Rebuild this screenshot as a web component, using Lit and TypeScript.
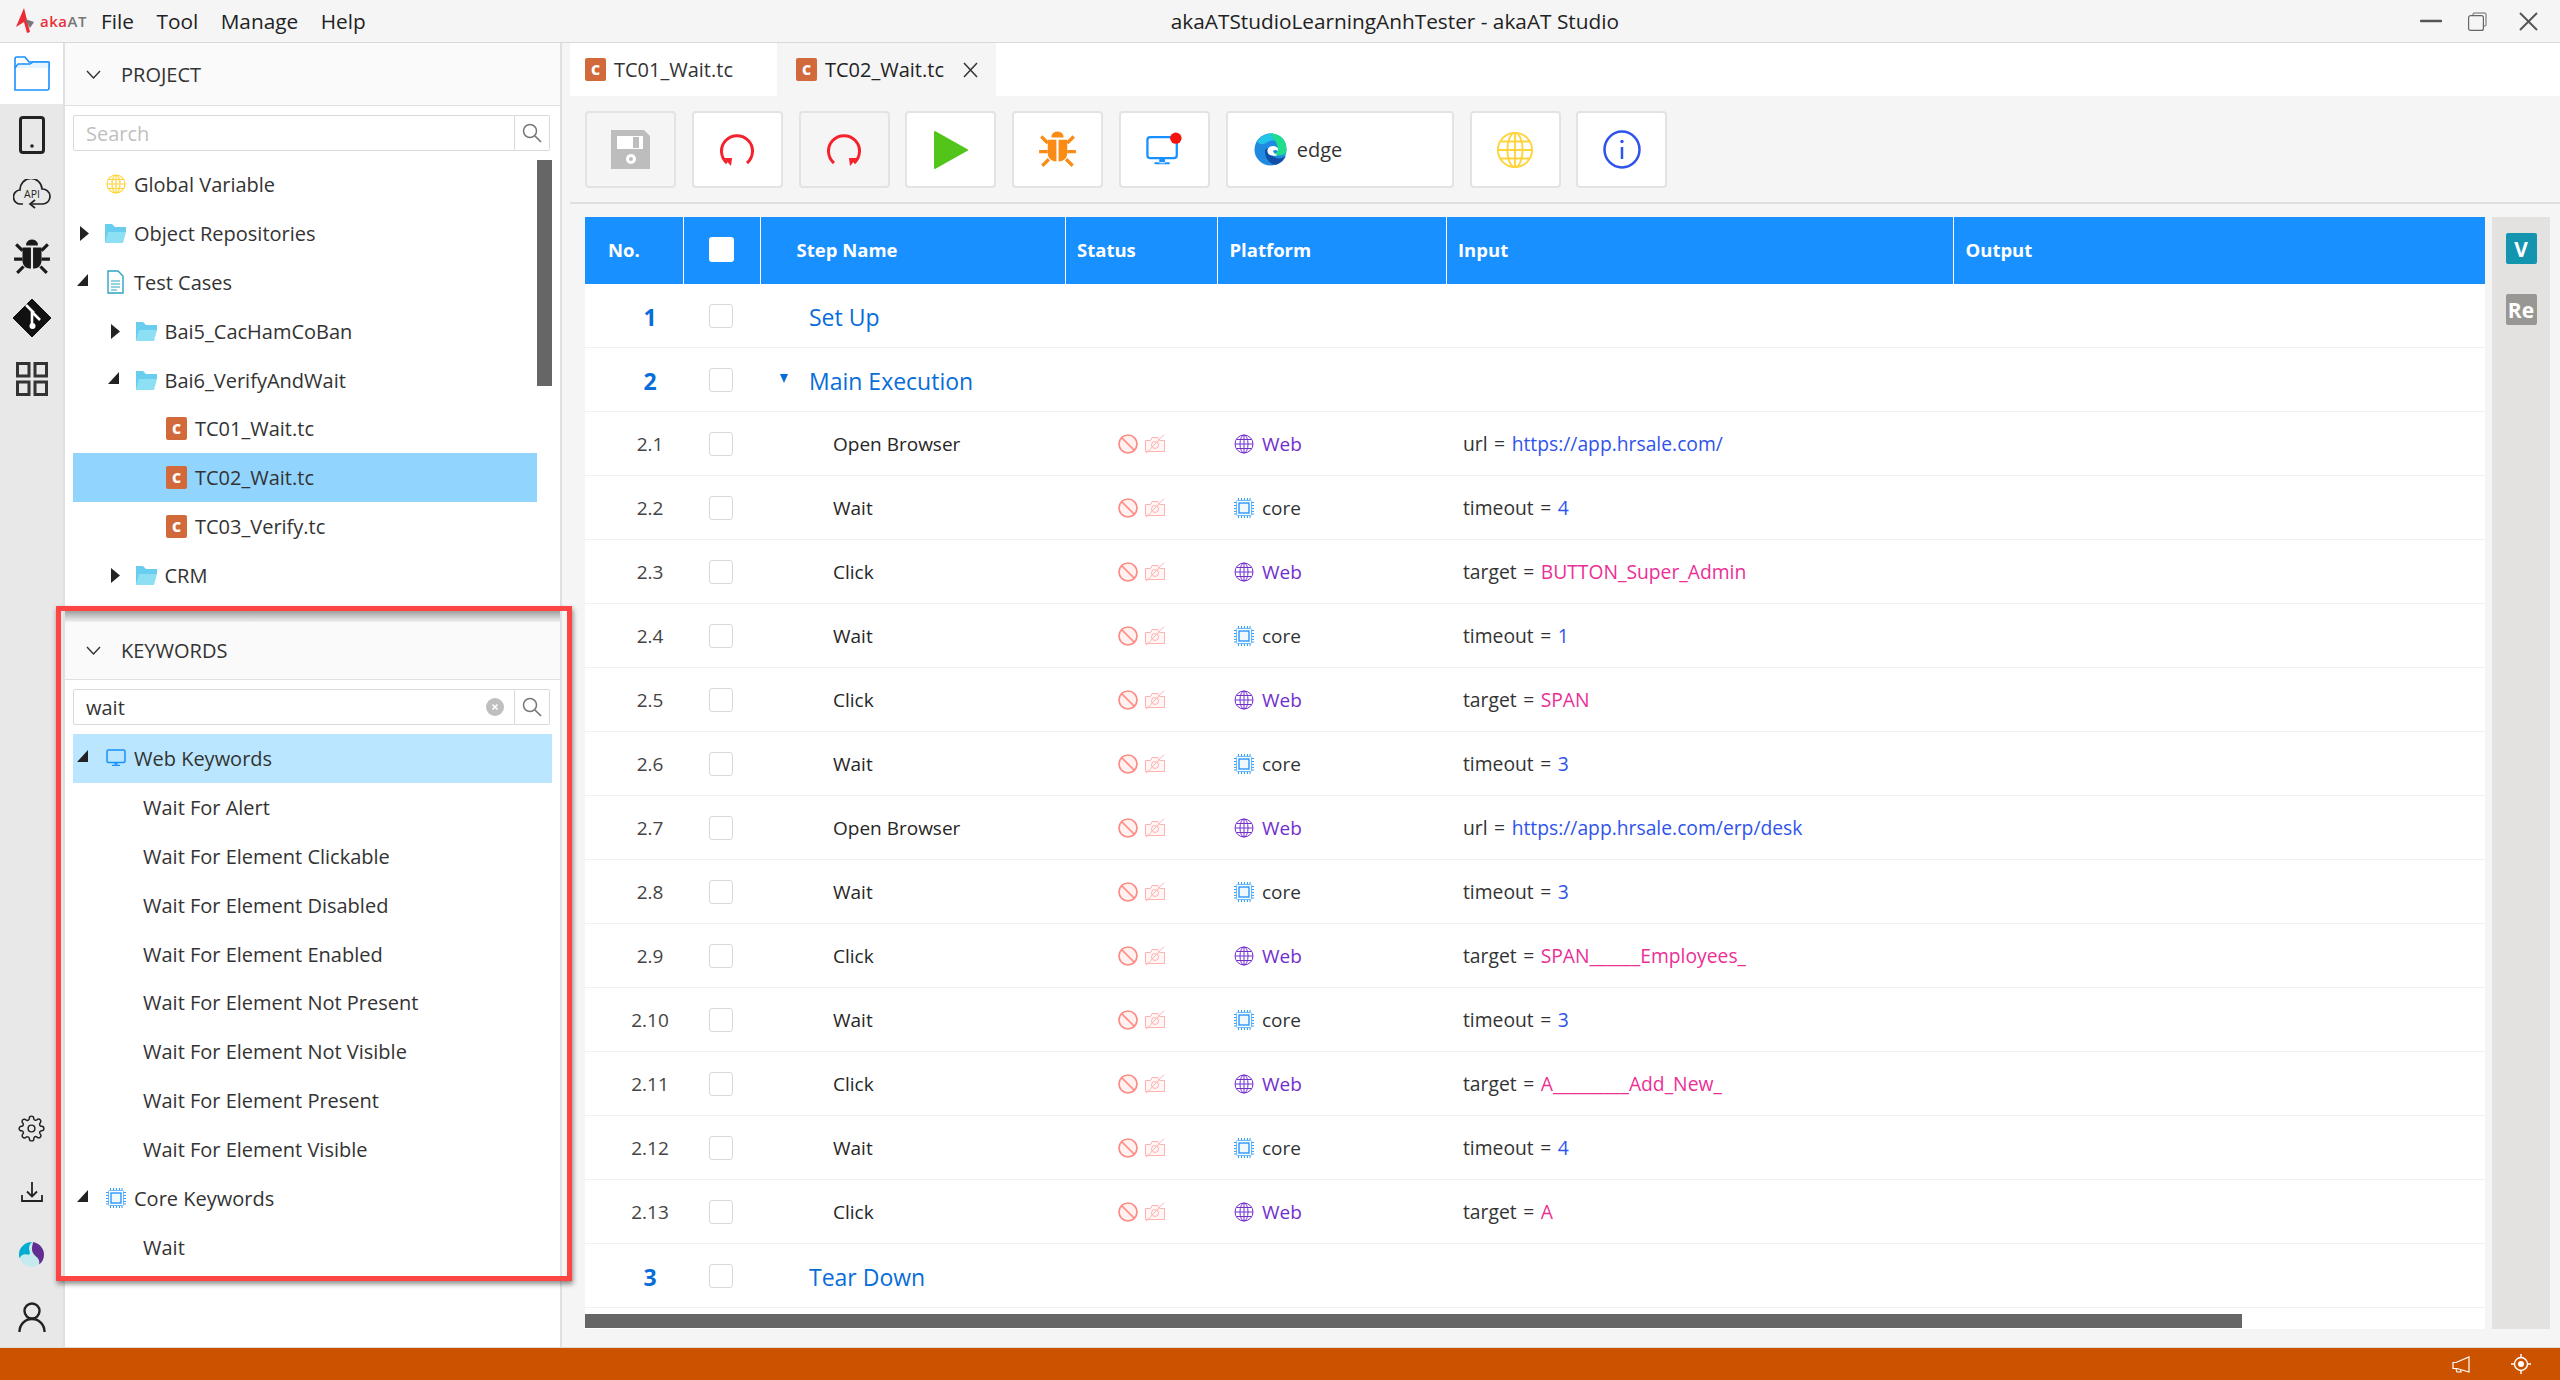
import { LitElement, html, css, svg } from "lit";
import { customElement } from "lit/decorators.js";

const icon = (w: number, h: number, box: string, body: unknown) => html`<svg
  width=${w}
  height=${h}
  viewBox=${box}
  fill="none"
  style="flex:none;display:block"
>
  ${body}
</svg>`;

const bugBody = (c: string) => svg`
  <path d="M12 5a6 6 0 0 1 11 0v2H12z" fill=${c} transform="translate(.5 -1)"/>
  <path d="M9 8h8v20c-5 0-8-3-8-8z" fill=${c}/>
  <path d="M19 8h8v12c0 5-3 8-8 8z" fill=${c}/>
  <path d="M9 11 3 5M27 11l6-6M9 19H1M27 19h8M10 26l-6 6M26 26l6 6" stroke=${c} stroke-width="3"/>`;

const icons = {
  logo: () =>
    icon(20, 26, "0 0 20 26", svg`
      <path d="M9 0 1 19l8-5 3 11 3-1L9 0z" fill="#ee2a33"/>
      <path d="M10 11l9 3-4 6z" fill="#777"/>`),
  folderLine: () =>
    icon(38, 36, "0 0 38 36", svg`
      <path d="M2 34V3q0-2 2-2h8l4 5h18q2 0 2 2v24q0 2-2 2z" stroke="#1890ff" stroke-width="1.6" fill="#fff"/>
      <path d="M2 12 5 8h12l3-2h16v6" stroke="#1890ff" stroke-width="1.4" fill="#e6f4ff"/>`),
  mobile: () =>
    icon(26, 38, "0 0 26 38", svg`
      <rect x="1.5" y="1.5" width="23" height="35" rx="2.5" stroke="#222" stroke-width="3"/>
      <circle cx="13" cy="30" r="1.8" fill="#222"/>`),
  api: () =>
    icon(38, 34, "0 0 38 34", svg`
      <path d="M10 25H8a7 7 0 0 1-1-14 11 11 0 0 1 22-1 7.5 7.5 0 0 1 1 15H18" stroke="#222" stroke-width="1.7"/>
      <path d="M22 21l-5 4 5 4" stroke="#222" stroke-width="1.7"/>
      <text x="19" y="19" font-size="10.5" text-anchor="middle" fill="#222" font-family="Open Sans">API</text>`),
  bugDark: () => icon(38, 38, "0 0 36 34", bugBody("#1a1a1a")),
  bugOrange: () => icon(39, 39, "0 0 36 34", bugBody("#fa8c16")),
  git: () =>
    icon(38, 38, "0 0 38 38", svg`
      <path d="M19 0 38 19 19 38 0 19z" fill="#111" stroke="#111" stroke-linejoin="round" stroke-width="1"/>
      <path d="M13 6l8 8M19 12v14M20 14l7 7" stroke="#fff" stroke-width="2.6"/>
      <circle cx="19.5" cy="27" r="3" fill="#fff"/>`),
  grid: () =>
    icon(32, 34, "0 0 32 34", svg`
      <g stroke="#333" stroke-width="3">
        <rect x="1.5" y="1.5" width="11.5" height="12.5"/>
        <rect x="19" y="1.5" width="11.5" height="12.5"/>
        <rect x="1.5" y="20" width="11.5" height="12.5"/>
        <rect x="19" y="20" width="11.5" height="12.5"/>
      </g>`),
  gear: () =>
    icon(27, 27, "0 0 24 24", svg`
      <g stroke="#222" stroke-width="1.3">
        <circle cx="12" cy="12" r="3"/>
        <path d="M19.4 15a1.65 1.65 0 0 0 .33 1.82l.06.06a2 2 0 0 1 0 2.83 2 2 0 0 1-2.83 0l-.06-.06a1.65 1.65 0 0 0-1.82-.33 1.65 1.65 0 0 0-1 1.51V21a2 2 0 0 1-2 2 2 2 0 0 1-2-2v-.09A1.65 1.65 0 0 0 9 19.4a1.65 1.65 0 0 0-1.82.33l-.06.06a2 2 0 0 1-2.83 0 2 2 0 0 1 0-2.83l.06-.06a1.65 1.65 0 0 0 .33-1.82 1.65 1.65 0 0 0-1.51-1H3a2 2 0 0 1-2-2 2 2 0 0 1 2-2h.09A1.65 1.65 0 0 0 4.6 9a1.65 1.65 0 0 0-.33-1.82l-.06-.06a2 2 0 0 1 0-2.83 2 2 0 0 1 2.83 0l.06.06a1.65 1.65 0 0 0 1.82.33H9a1.65 1.65 0 0 0 1-1.51V3a2 2 0 0 1 2-2 2 2 0 0 1 2 2v.09a1.65 1.65 0 0 0 1 1.51 1.65 1.65 0 0 0 1.82-.33l.06-.06a2 2 0 0 1 2.83 0 2 2 0 0 1 0 2.83l-.06.06a1.65 1.65 0 0 0-.33 1.82V9a1.65 1.65 0 0 0 1.51 1H21a2 2 0 0 1 2 2 2 2 0 0 1-2 2h-.09a1.65 1.65 0 0 0-1.51 1z"/>
      </g>`),
  download: () =>
    icon(22, 22, "0 0 22 22", svg`
      <path d="M11 1v14M6 10.500l5 5 5-5M1 14v6h20v-6" stroke="#222" stroke-width="1.8"/>`),
  swirl: () =>
    icon(25, 25, "0 0 25 25", svg`
      <circle cx="12.500" cy="12.500" r="12.500" fill="#c6ebee"/>
      <path d="M14 .1C21 1.500 25 7 25 12.500c0 4.500-2 8-5 10 1-3.500-.5-6-3-8s-4.500-5-4-8.500c.3-2.500 1-4.500 1-5.900z" fill="#642d91"/>
      <path d="M13 0C6 0 0 5.500 0 12.500c0 1.500.2 2.500.6 3.700C2 13 5 11.500 8 12.500c2.500.7 3.500-1 2.500-3.500S10 2.500 13 0z" fill="#00acd2"/>`),
  user: () =>
    icon(28, 31, "0 0 28 31", svg`
      <circle cx="14" cy="9" r="7.500" stroke="#222" stroke-width="2.4"/>
      <path d="M1.500 30c0-7 5-13 12.500-13s12.500 6 12.500 13" stroke="#222" stroke-width="2.4"/>`),
  chevron: () =>
    icon(15, 9, "0 0 15 9", svg`<path d="M1 1l6.500 7L14 1" stroke="#333" stroke-width="1.4"/>`),
  search: () =>
    icon(20, 20, "0 0 20 20", svg`
      <circle cx="8" cy="8" r="6.500" stroke="#777" stroke-width="1.5"/>
      <path d="M13 13l6 6" stroke="#777" stroke-width="1.7"/>`),
  clear: () =>
    icon(18, 18, "0 0 18 18", svg`
      <circle cx="9" cy="9" r="9" fill="#bfbfbf"/>
      <path d="M6.500 6.500l5 5M11.500 6.500l-5 5" stroke="#fff" stroke-width="1.5"/>`),
  triRight: () =>
    icon(9, 15, "0 0 9 15", svg`<path d="M0 0l9 7.500L0 15z" fill="#222"/>`),
  triOpen: () =>
    icon(11, 12, "0 0 11 12", svg`<path d="M11 0v12H0z" fill="#222"/>`),
  triDown: () =>
    icon(8, 9, "0 0 8 9", svg`<path d="M0 0h8L4 9z" fill="#096dd9"/>`),
  globe: (size: number, c: string, sw = 1.3) =>
    icon(size, size, "0 0 20 20", svg`
      <g stroke=${c} stroke-width=${sw}>
        <circle cx="10" cy="10" r="9"/>
        <ellipse cx="10" cy="10" rx="4" ry="9"/>
        <path d="M10 1v18M1 10h18M2.500 5.500h15M2.500 14.500h15"/>
      </g>`),
  folder: () =>
    icon(21, 19, "0 0 21 19", svg`
      <path d="M0 19V0h7l3 3h11v5H5z" fill="#69cdf0"/>
      <path d="M3 8h18l-3 11H0z" fill="#8de0f4"/>`),
  doc: () =>
    icon(17, 24, "0 0 17 24", svg`
      <path d="M1 1h10l5 5v17H1z" stroke="#2ea3c6" stroke-width="1.400" fill="#fff"/>
      <path d="M4 11h9M4 14h9M4 17h9M4 20h6" stroke="#2ea3c6" stroke-width="1.200"/>`),
  monitor: (w: number, h: number) =>
    icon(w, h, "0 0 20 18", svg`
      <rect x="1" y="1" width="18" height="12.500" rx="1.500" stroke="#1890ff" stroke-width="1.500"/>
      <path d="M6 17h8v-1.200H6zM8.500 14h3v2h-3z" fill="#1890ff"/>`),
  chip: () =>
    icon(20, 20, "0 0 20 20", svg`
      <path d="M4.500 0v3M7.500 0v3M10.500 0v3M13.500 0v3M16 0v3M4.500 17v3M7.500 17v3M10.500 17v3M13.500 17v3M16 17v3M0 4.500h3M0 7.500h3M0 10.500h3M0 13.500h3M0 16h3M17 4.500h3M17 7.500h3M17 10.500h3M17 13.500h3M17 16h3" stroke="#1890ff" stroke-width=".9"/>
      <rect x="2.500" y="2.500" width="15" height="15" rx="1" fill="#fff" stroke="#69b8ff" stroke-width="1"/>
      <rect x="5" y="5" width="10" height="10" fill="#f0f8ff" stroke="#1890ff" stroke-width="1.300"/>`),
  save: () =>
    icon(39, 39, "0 0 39 39", svg`
      <path d="M0 0h33l6 6v33H0z" fill="#bdbdbd"/>
      <rect x="6" y="6" width="26" height="13" fill="#fff"/>
      <rect x="22" y="7" width="6" height="11" fill="#bdbdbd"/>
      <circle cx="20" cy="29" r="5" fill="#fff"/>
      <circle cx="20" cy="29" r="2" fill="#bdbdbd"/>`),
  refresh: () =>
    icon(34, 35, "0 0 34 35", svg`
      <path d="M7 31A15.500 15.500 0 1 1 27 31" stroke="#f5222d" stroke-width="3"/>
      <path d="M4 26h8l-1 8z" fill="#f5222d"/>`),
  refreshRev: () =>
    icon(34, 35, "0 0 34 35", svg`
      <path d="M7 31A15.500 15.500 0 1 1 27 31" stroke="#f5222d" stroke-width="3"/>
      <path d="M30 26h-8l1 8z" fill="#f5222d"/>`),
  play: () =>
    icon(34, 40, "0 0 34 40", svg`
      <path d="M1 2 33 20 1 38z" fill="#52c41a" stroke="#52c41a" stroke-width="2" stroke-linejoin="round"/>`),
  monitorDot: () =>
    icon(36, 36, "0 0 38 38", svg`
      <rect x="1.500" y="5.500" width="31" height="22" rx="3" stroke="#1890ff" stroke-width="2.400"/>
      <path d="M9 34h16v-2H9zM14 28h6v5h-6z" fill="#1890ff"/>
      <circle cx="31.500" cy="6.500" r="6" fill="#f5110c"/>`),
  edge: () =>
    icon(33, 33, "0 0 33 33", svg`
      <circle cx="16.500" cy="16.500" r="16" fill="#1f8ae0"/>
      <path d="M3 9C7 2 14 .5 17 .5c8 0 14 5 15.500 13-5-6-14-8-20-4-3 2-5 3-9.500-.5z" fill="#22c4e8"/>
      <path d="M16 .5c9 0 16.500 6 16.500 16 0 3-2 6-7 6-3 0-5-1-5-2 3-1 4-3 3-7-1-5-4-9-7.500-13z" fill="#20dd8a"/>
      <path d="M11 17c-1 8 6 16 12 14.500C27 30 30 27 32 23c-4 3-9 3-12 1-3-2-2-5-1-7-3-2-7-2-8 0z" fill="#0f4fa8"/>
      <path d="M13.500 17c1-4 6-5 9-3 1.500 1 2 2.500 1 4-1-1-3-1.500-4-.5-1 1.500 1 4 4 4.500-3 1.500-7 1-9-1-1-1-1.300-2.500-1-4z" fill="#fff"/>`),
  info: () =>
    icon(38, 39, "0 0 38 39", svg`
      <ellipse cx="19" cy="19.500" rx="17.500" ry="18" stroke="#2f54eb" stroke-width="2.500"/>
      <path d="M19 17v12" stroke="#2f54eb" stroke-width="2.500"/>
      <circle cx="19" cy="11.500" r="1.700" fill="#2f54eb"/>`),
  ban: () =>
    icon(20, 20, "0 0 20 20", svg`
      <circle cx="10" cy="10" r="9" fill="#fff1f0" stroke="#ff8a85" stroke-width="1.700"/>
      <path d="M4 4l12 12" stroke="#ff8a85" stroke-width="1.700"/>`),
  cameraOff: () =>
    icon(20, 20, "0 0 20 20", svg`
      <g stroke="#ffb3b0" stroke-width="1">
        <path d="M.5 6.500h5l1.500-3h6l1.500 3h5v11H.500z" fill="#fff5f5"/>
        <circle cx="10" cy="11" r="3.500"/>
        <path d="M1 19.500 19 .5"/>
      </g>`),
  minimize: () =>
    icon(22, 4, "0 0 22 4", svg`<path d="M1 2h20" stroke="#555" stroke-width="2.400" stroke-linecap="round"/>`),
  restore: () =>
    icon(19, 19, "0 0 19 19", svg`
      <path d="M5 3V2q0-1 1-1h11q1 0 1 1v11q0 1-1 1h-1" stroke="#666" stroke-width="1"/>
      <rect x=".6" y="3.600" width="14.800" height="14.800" rx="2" stroke="#666" stroke-width="1.200"/>`),
  close: () =>
    icon(19, 19, "0 0 19 19", svg`<path d="M1 1l17 17M18 1 1 18" stroke="#555" stroke-width="2"/>`),
  tabClose: () =>
    icon(15, 16, "0 0 15 16", svg`<path d="M1 1l13 14M14 1 1 15" stroke="#333" stroke-width="1.500"/>`),
  megaphone: () =>
    icon(18, 17, "0 0 18 17", svg`
      <path d="M17 1v15L5 12.500H1v-6H4zM4 13l1 3h4l-.5-2" stroke="#fff" stroke-width="1.200"/>`),
  target: () =>
    icon(20, 20, "0 0 20 20", svg`
      <circle cx="10" cy="10" r="6.500" stroke="#fff" stroke-width="1.400"/>
      <circle cx="10" cy="10" r="3" fill="#fff"/>
      <path d="M10 0v4M10 16v4M0 10h4M16 10h4" stroke="#fff" stroke-width="1.400"/>`),
};

type TreeNode = { label: string; level: number; kind: string; arrow?: string; selected?: boolean };

const projectTree: TreeNode[] = [
  { label: "Global Variable", level: 0, kind: "globe" },
  { label: "Object Repositories", level: 0, kind: "folder", arrow: "right" },
  { label: "Test Cases", level: 0, kind: "doc", arrow: "open" },
  { label: "Bai5_CacHamCoBan", level: 1, kind: "folder", arrow: "right" },
  { label: "Bai6_VerifyAndWait", level: 1, kind: "folder", arrow: "open" },
  { label: "TC01_Wait.tc", level: 2, kind: "tc" },
  { label: "TC02_Wait.tc", level: 2, kind: "tc", selected: true },
  { label: "TC03_Verify.tc", level: 2, kind: "tc" },
  { label: "CRM", level: 1, kind: "folder", arrow: "right" },
];

const webKeywords = [
  "Wait For Alert",
  "Wait For Element Clickable",
  "Wait For Element Disabled",
  "Wait For Element Enabled",
  "Wait For Element Not Present",
  "Wait For Element Not Visible",
  "Wait For Element Present",
  "Wait For Element Visible",
];

type Step = { no: string; name: string; web: boolean; key: string; val: string; tone: string };

const steps: Step[] = [
  { no: "2.1", name: "Open Browser", web: true, key: "url", val: "https://app.hrsale.com/", tone: "blue" },
  { no: "2.2", name: "Wait", web: false, key: "timeout", val: "4", tone: "blue" },
  { no: "2.3", name: "Click", web: true, key: "target", val: "BUTTON_Super_Admin", tone: "pink" },
  { no: "2.4", name: "Wait", web: false, key: "timeout", val: "1", tone: "blue" },
  { no: "2.5", name: "Click", web: true, key: "target", val: "SPAN", tone: "pink" },
  { no: "2.6", name: "Wait", web: false, key: "timeout", val: "3", tone: "blue" },
  { no: "2.7", name: "Open Browser", web: true, key: "url", val: "https://app.hrsale.com/erp/desk", tone: "blue" },
  { no: "2.8", name: "Wait", web: false, key: "timeout", val: "3", tone: "blue" },
  { no: "2.9", name: "Click", web: true, key: "target", val: "SPAN______Employees_", tone: "pink" },
  { no: "2.10", name: "Wait", web: false, key: "timeout", val: "3", tone: "blue" },
  { no: "2.11", name: "Click", web: true, key: "target", val: "A_________Add_New_", tone: "pink" },
  { no: "2.12", name: "Wait", web: false, key: "timeout", val: "4", tone: "blue" },
  { no: "2.13", name: "Click", web: true, key: "target", val: "A", tone: "pink" },
];

@customElement("app-root")
export class AppRoot extends LitElement {
  static styles = css`
    :host {
      display: flex;
      flex-direction: column;
      position: relative;
      width: 100%;
      height: 1380px;
      overflow: hidden;
      font-family: "Open Sans", "Noto Sans", sans-serif;
      font-size: 20px;
      color: #333;
      background: #f5f5f5;
    }

    /* title bar */
    .titlebar {
      display: flex;
      align-items: center;
      height: 42px;
      flex: none;
      padding: 0 22px 0 15px;
      border-bottom: 1px solid #d9d9d9;
      color: #222;
      font-size: 20.800px;
    }
    .logo {
      display: flex;
      align-items: center;
      gap: 5px;
      width: 86px;
      font-size: 15px;
      font-weight: 600;
      letter-spacing: 0.5px;
    }
    .logo-aka {
      color: #e8303a;
    }
    .logo-at {
      color: #777;
      margin-left: -5px;
    }
    .menu {
      display: flex;
      gap: 22.5px;
    }
    .title {
      flex: 1;
      text-align: center;
      padding-left: 4px;
    }
    .win {
      display: flex;
      align-items: center;
    }
    .win-min {
      margin-right: 26px;
    }
    .win-restore {
      margin-right: 32px;
    }

    .body {
      display: flex;
      flex: 1;
      min-height: 0;
    }

    /* left icon rail */
    .rail {
      display: flex;
      flex-direction: column;
      flex: none;
      width: 63px;
      background: #e8e8e8;
      overflow: hidden;
    }
    .rail-item {
      display: flex;
      align-items: center;
      justify-content: center;
      height: 61px;
      flex: none;
    }
    .rail-item.active {
      background: #fff;
    }
    .rail-bottom {
      margin-top: auto;
      margin-bottom: -2px;
    }
    .rail-bottom .rail-item {
      height: 63px;
    }

    /* project and keywords panels */
    .side {
      display: flex;
      flex-direction: column;
      flex: none;
      width: 499px;
      box-sizing: border-box;
      background: #fff;
      border-left: 2px solid #e0e0e0;
      border-right: 2px solid #e0e0e0;
    }
    .panel-head {
      display: flex;
      align-items: center;
      gap: 20px;
      padding-left: 21px;
      background: #fafafa;
      border-bottom: 1px solid #e0e0e0;
      flex: none;
    }
    .panel-head.project {
      height: 62px;
    }
    .panel-head.keywords {
      height: 57px;
    }
    .search {
      display: flex;
      margin: 9px 0 9px 8px;
      width: 477px;
      height: 36px;
      flex: none;
    }
    .search-box {
      display: flex;
      align-items: center;
      flex: 1;
      min-width: 0;
      box-sizing: border-box;
      padding: 0 10px 0 12px;
      border: 1px solid #d9d9d9;
      border-radius: 2px 0 0 2px;
    }
    .search-box input {
      flex: 1;
      min-width: 0;
      border: 0;
      outline: 0;
      padding: 0;
      background: transparent;
      font: inherit;
      color: #333;
    }
    .search-box input::placeholder {
      color: #bfbfbf;
    }
    .search-btn {
      display: flex;
      align-items: center;
      justify-content: center;
      flex: none;
      width: 35px;
      box-sizing: border-box;
      border: 1px solid #d9d9d9;
      border-left: 0;
      border-radius: 0 2px 2px 0;
    }
    .project-body {
      display: flex;
      flex: none;
      height: 445px;
      padding-left: 8px;
    }
    .tree {
      width: 464px;
      flex: none;
    }
    .scroll-thumb {
      width: 15px;
      height: 226px;
      background: #666;
    }
    .splitter {
      flex: none;
      height: 13px;
      margin-top: 4px;
      background: linear-gradient(#8f8f8f, #c8c8c8 55%, #f0f0f0);
    }
    .kw-list {
      margin-left: 8px;
      width: 479px;
    }
    .node {
      display: flex;
      align-items: center;
      height: 48.9px;
      box-sizing: border-box;
    }
    .node.selected {
      background: #91d5ff;
    }
    .node.hover {
      background: #bae7ff;
    }
    .node-arrow {
      display: flex;
      align-items: center;
      flex: none;
      width: 32px;
      padding-left: 7px;
      box-sizing: border-box;
    }
    .node-arrow.open {
      padding: 0 0 4px 4px;
    }
    .node-icon {
      display: flex;
      align-items: center;
      justify-content: center;
      flex: none;
      width: 21px;
      margin-right: 8px;
    }
    .kw-leaf {
      padding-left: 70px;
    }
    .tc {
      display: flex;
      align-items: center;
      justify-content: center;
      flex: none;
      width: 21px;
      height: 23px;
      border-radius: 2px;
      background: #d2693a;
      color: #fff;
      font-size: 14px;
      font-weight: 800;
      line-height: 1;
    }

    /* editor */
    .main {
      display: flex;
      flex-direction: column;
      flex: 1;
      min-width: 0;
    }
    .tabs {
      display: flex;
      height: 53px;
      flex: none;
      margin-left: 8px;
      background: #fff;
    }
    .tab {
      display: flex;
      align-items: center;
      gap: 8px;
      box-sizing: border-box;
    }
    .tab.one {
      width: 207px;
      padding-left: 15px;
    }
    .tab.two {
      width: 219px;
      padding-left: 19px;
      background: #f5f5f5;
      color: #222;
    }
    .tab.two svg:last-child {
      margin-left: 11px;
    }
    .toolbar {
      display: flex;
      align-items: center;
      gap: 15.8px;
      height: 108px;
      flex: none;
      box-sizing: border-box;
      margin-left: 8px;
      padding: 1px 0 0 15px;
      border-bottom: 2px solid #e0e0e0;
    }
    .tool {
      display: flex;
      align-items: center;
      justify-content: center;
      width: 91px;
      height: 77px;
      flex: none;
      box-sizing: border-box;
      background: #fff;
      border: 2px solid #e3e3e3;
      border-radius: 4px;
    }
    .tool.off {
      background: #f5f5f5;
    }
    .tool.browser {
      width: 228px;
      justify-content: flex-start;
      gap: 10px;
      padding-left: 26px;
    }
    .work {
      display: flex;
      flex: 1;
      min-height: 0;
      padding: 13px 10px 18px 23px;
      gap: 7px;
      font-size: 19px;
    }
    .table {
      display: flex;
      flex-direction: column;
      flex: 1;
      min-width: 0;
      background: #fff;
    }
    .grid {
      display: grid;
      grid-template-columns: 98px 76.5px 305px 152.5px 228.5px 507.5px 1fr;
      flex: none;
    }
    .head {
      height: 67px;
      background: #1890ff;
      color: #fff;
      font-weight: 700;
      font-size: 18.5px;
    }
    .head > div {
      display: flex;
      align-items: center;
      padding: 0 0 2px 11.5px;
      border-left: 1px solid #fff;
    }
    .head > div:first-child {
      padding-left: 23px;
      border-left: 0;
    }
    .head > div:nth-child(2) {
      padding-left: 25px;
    }
    .head > div:nth-child(3) {
      padding-left: 36px;
    }
    .head-check {
      width: 25px;
      height: 25px;
      background: #fff;
      border-radius: 3px;
    }
    .row {
      height: 64px;
      box-sizing: border-box;
      border-bottom: 1.500px solid #f0f0f0;
    }
    .row > div {
      display: flex;
      align-items: center;
      min-width: 0;
    }
    .c-no {
      justify-content: center;
      padding-left: 32px;
      color: #444;
    }
    .c-check {
      justify-content: center;
    }
    .check {
      width: 24px;
      height: 24px;
      box-sizing: border-box;
      background: #fff;
      border: 1.500px solid #d9d9d9;
      border-radius: 3px;
    }
    .c-step {
      padding-left: 73.5px;
      color: #262626;
    }
    .group .c-no {
      padding-top: 2px;
      color: #096dd9;
      font-weight: 700;
      font-size: 23px;
    }
    .group .c-step {
      padding-top: 2px;
      padding-left: 20.5px;
      color: #096dd9;
      font-size: 23px;
      font-weight: 500;
    }
    .group-arrow {
      display: flex;
      align-items: center;
      flex: none;
      width: 29px;
      padding-bottom: 4px;
      box-sizing: border-box;
    }
    .c-status {
      gap: 7px;
      padding-left: 53.5px;
    }
    .c-platform {
      gap: 8px;
      padding-left: 17px;
    }
    .c-platform.web {
      color: #722ed1;
    }
    .c-input {
      padding-left: 17.5px;
      white-space: pre;
      font-size: 19.3px;
      word-spacing: 1.5px;
    }
    .blue {
      color: #2f54eb;
    }
    .pink {
      color: #eb2f96;
    }
    .hscroll {
      margin-top: 6px;
      height: 14px;
      width: 1657px;
      background: #666;
      flex: none;
    }
    .side-tabs {
      display: flex;
      flex-direction: column;
      align-items: center;
      gap: 30px;
      flex: none;
      width: 58px;
      box-sizing: border-box;
      padding-top: 16px;
      background: #e3e2e0;
    }
    .side-tab {
      display: flex;
      align-items: center;
      justify-content: center;
      width: 31px;
      height: 31px;
      border-radius: 2px;
      color: #fff;
      font-weight: 700;
      font-size: 21px;
    }
    .side-tab.v {
      background: #1395b0;
    }
    .side-tab.re {
      background: #999794;
    }

    .statusbar {
      display: flex;
      align-items: center;
      justify-content: flex-end;
      gap: 41px;
      height: 32px;
      flex: none;
      padding-right: 29px;
      background: #cb5300;
      border-top: 1px solid #ddd;
    }

    /* callout drawn over the keywords panel */
    .callout {
      position: absolute;
      left: 56px;
      top: 606px;
      width: 516px;
      height: 675px;
      box-sizing: border-box;
      border: 5px solid #ff4444;
      box-shadow: 1px 3px 5px rgba(0, 0, 0, 0.45);
      pointer-events: none;
    }
  `;

  private tcIcon() {
    return html`<span class="tc">C</span>`;
  }

  private nodeIcon(kind: string) {
    if (kind === "globe") return icons.globe(20, "#ffd43b", 1.2);
    if (kind === "folder") return icons.folder();
    if (kind === "doc") return icons.doc();
    if (kind === "tc") return this.tcIcon();
    if (kind === "monitor") return icons.monitor(20, 18);
    return icons.chip();
  }

  private node(n: TreeNode) {
    return html`<div
      class="node ${n.selected ? "selected" : ""}"
      style="padding-left:${n.level * 30.5}px"
    >
      <span class="node-arrow ${n.arrow === "open" ? "open" : ""}">
        ${n.arrow === "right" ? icons.triRight() : n.arrow === "open" ? icons.triOpen() : ""}
      </span>
      <span class="node-icon">${this.nodeIcon(n.kind)}</span>
      <span>${n.label}</span>
    </div>`;
  }

  private groupRow(no: string, name: string, open = false) {
    return html`<div class="grid row group">
      <div class="c-no">${no}</div>
      <div class="c-check"><span class="check"></span></div>
      <div class="c-step">
        <span class="group-arrow">${open ? icons.triDown() : ""}</span>${name}
      </div>
      <div></div>
      <div></div>
      <div></div>
      <div></div>
    </div>`;
  }

  private stepRow(s: Step) {
    return html`<div class="grid row">
      <div class="c-no">${s.no}</div>
      <div class="c-check"><span class="check"></span></div>
      <div class="c-step">${s.name}</div>
      <div class="c-status">${icons.ban()}${icons.cameraOff()}</div>
      <div class="c-platform ${s.web ? "web" : ""}">
        ${s.web ? icons.globe(20, "#722ed1", 1) : icons.chip()}${s.web ? "Web" : "core"}
      </div>
      <div class="c-input">${s.key} = <span class=${s.tone}>${s.val}</span></div>
      <div></div>
    </div>`;
  }

  private kwGroup(label: string, kind: string, hover: boolean) {
    return html`<div class="node ${hover ? "hover" : ""}">
      <span class="node-arrow open">${icons.triOpen()}</span>
      <span class="node-icon">${this.nodeIcon(kind)}</span>
      <span>${label}</span>
    </div>`;
  }

  render() {
    return html`
      <div class="titlebar">
        <div class="logo">
          ${icons.logo()}<span class="logo-aka">aka</span><span class="logo-at">AT</span>
        </div>
        <div class="menu">
          <span>File</span><span>Tool</span><span>Manage</span><span>Help</span>
        </div>
        <div class="title">akaATStudioLearningAnhTester - akaAT Studio</div>
        <div class="win">
          <span class="win-min">${icons.minimize()}</span>
          <span class="win-restore">${icons.restore()}</span>
          ${icons.close()}
        </div>
      </div>

      <div class="body">
        <div class="rail">
          <div class="rail-item active">${icons.folderLine()}</div>
          <div class="rail-item">${icons.mobile()}</div>
          <div class="rail-item">${icons.api()}</div>
          <div class="rail-item">${icons.bugDark()}</div>
          <div class="rail-item">${icons.git()}</div>
          <div class="rail-item">${icons.grid()}</div>
          <div class="rail-bottom">
            <div class="rail-item">${icons.gear()}</div>
            <div class="rail-item">${icons.download()}</div>
            <div class="rail-item">${icons.swirl()}</div>
            <div class="rail-item">${icons.user()}</div>
          </div>
        </div>

        <div class="side">
          <div class="panel-head project">${icons.chevron()}<span>PROJECT</span></div>
          <div class="search">
            <div class="search-box"><input placeholder="Search" /></div>
            <div class="search-btn">${icons.search()}</div>
          </div>
          <div class="project-body">
            <div class="tree">${projectTree.map((n) => this.node(n))}</div>
            <div class="scroll-thumb"></div>
          </div>
          <div class="splitter"></div>
          <div class="panel-head keywords">${icons.chevron()}<span>KEYWORDS</span></div>
          <div class="search">
            <div class="search-box"><input .value=${"wait"} />${icons.clear()}</div>
            <div class="search-btn">${icons.search()}</div>
          </div>
          <div class="kw-list">
            ${this.kwGroup("Web Keywords", "monitor", true)}
            ${webKeywords.map((k) => html`<div class="node kw-leaf">${k}</div>`)}
            ${this.kwGroup("Core Keywords", "chip", false)}
            <div class="node kw-leaf">Wait</div>
          </div>
        </div>

        <div class="main">
          <div class="tabs">
            <div class="tab one">${this.tcIcon()}<span>TC01_Wait.tc</span></div>
            <div class="tab two">
              ${this.tcIcon()}<span>TC02_Wait.tc</span>${icons.tabClose()}
            </div>
          </div>

          <div class="toolbar">
            <div class="tool off">${icons.save()}</div>
            <div class="tool">${icons.refresh()}</div>
            <div class="tool off">${icons.refreshRev()}</div>
            <div class="tool">${icons.play()}</div>
            <div class="tool">${icons.bugOrange()}</div>
            <div class="tool">${icons.monitorDot()}</div>
            <div class="tool browser">${icons.edge()}<span>edge</span></div>
            <div class="tool">${icons.globe(38, "#ffd43b", 1)}</div>
            <div class="tool">${icons.info()}</div>
          </div>

          <div class="work">
            <div class="table">
              <div class="grid head">
                <div>No.</div>
                <div><span class="head-check"></span></div>
                <div>Step Name</div>
                <div>Status</div>
                <div>Platform</div>
                <div>Input</div>
                <div>Output</div>
              </div>
              ${this.groupRow("1", "Set Up")}
              ${this.groupRow("2", "Main Execution", true)}
              ${steps.map((s) => this.stepRow(s))}
              ${this.groupRow("3", "Tear Down")}
              <div class="hscroll"></div>
            </div>
            <div class="side-tabs">
              <div class="side-tab v">V</div>
              <div class="side-tab re">Re</div>
            </div>
          </div>
        </div>
      </div>

      <div class="statusbar">${icons.megaphone()}${icons.target()}</div>
      <div class="callout"></div>
    `;
  }
}
